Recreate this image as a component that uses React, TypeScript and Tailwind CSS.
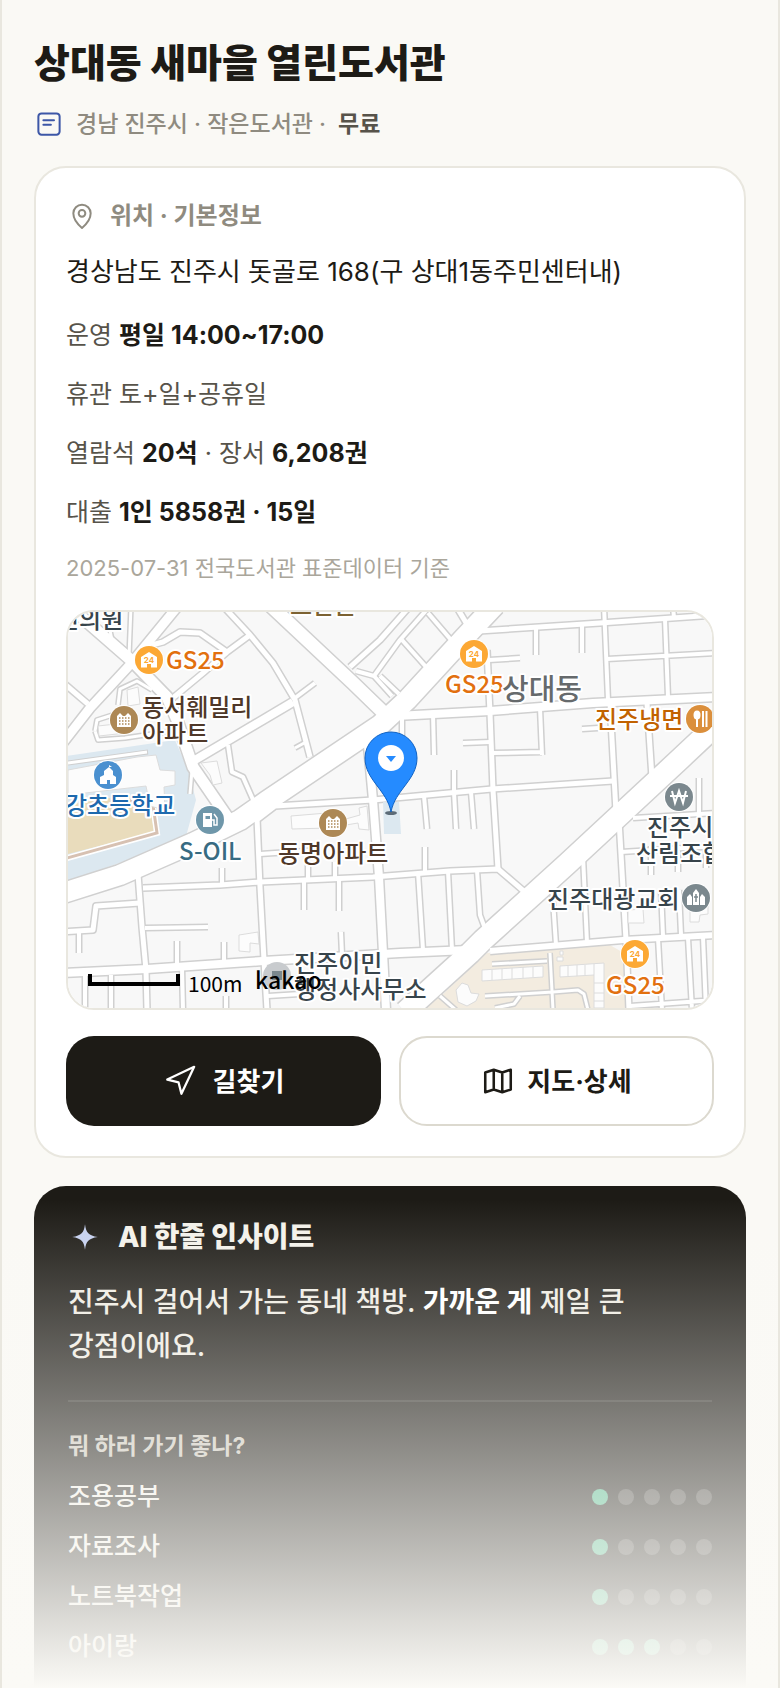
import React from 'react'
import { Navigation } from 'lucide-react'

type Road = { w: number; d: string }

const roads: Road[] = [
    // main roads
    { w: 20, d: 'M60 894 L120 875 L193 843 L240 820 L267 801 L380 725 L407 700 L463 639 L495 605' },
    { w: 21, d: 'M730 712 L680 759 L567 864 L483 940 L470 953 L405 1012' },
    { w: 11, d: 'M62 600 L132 661 L167 697 L177 720 L193 767 L228 818' },
    { w: 9, d: 'M178 606 L128 667 L90 708 L62 744' },
    { w: 13, d: 'M271 606 L353 683 L385 714' },
    { w: 8, d: 'M367 735 L373 800 L379 877 L386 1010' },
    { w: 8, d: 'M396 716 L490 711 L593 703 L716 697' },
    { w: 8, d: 'M60 973 L147 969 L263 961 L400 953 L468 950' },
    { w: 8, d: 'M293 702 L190 763' },
    { w: 6, d: 'M490 951 L623 940 L716 935' },
    // side streets
    { w: 5, d: 'M223 606 L250 635 L273 663 L295 700 L310 757' },
    { w: 4, d: 'M295 698 L315 683' },
    { w: 5, d: 'M350 667 L380 640 L410 606' },
    { w: 4, d: 'M356 671 L374 676 L392 696 M374 676 L400 640 L430 606' },
    { w: 4, d: 'M428 613 L452 641 M402 640 L427 668 M380 676 L399 694' },
    { w: 5, d: 'M456 606 L468 626' },
    { w: 5, d: 'M250 635 L227 652 L203 673 L174 697' },
    { w: 5, d: 'M152 645 L163 642 L180 632 L200 633 L227 652' },
    { w: 4, d: 'M228 745 L232 772 L243 777 L254 802' },
    { w: 3, d: 'M131 606 L129 657 M106 612 L112 640' },
    { w: 5, d: 'M60 680 L88 704' },
    { w: 3, d: 'M118 705 L120 689 L137 681 L152 690 M95 731 L97 720 L122 712 M95 731 L98 740 L125 738 L172 731' },
    { w: 3, d: 'M190 794 L192 770 M295 748 L306 742' },
    { w: 5, d: 'M258 819 L275 806 L373 800 L492 789 L613 781' },
    { w: 5, d: 'M257 818 L260 887 L264 960 L267 1010' },
    { w: 5, d: 'M143 888 L220 885 L260 882 L373 877 L450 871 L498 869 L526 893' },
    { w: 5, d: 'M138 874 L142 927 L146 970 L147 1010' },
    { w: 5, d: 'M60 932 L93 930 L96 906 L140 903' },
    { w: 4, d: 'M145 928 L208 927 M79 933 L79 953 M177 941 L177 966 M224 942 L224 962 M222 868 L222 885' },
    { w: 4, d: 'M260 854 L320 850 M308 862 L308 880 M335 862 L335 880 M304 882 L304 910 M339 880 L339 911 M341 932 L342 955' },
    { w: 4, d: 'M85 975 L85 1010 M111 975 L111 1010 M182 968 L183 1010 M226 996 L226 1010 M268 996 L300 994' },
    { w: 4, d: 'M418 872 L423 950 M448 871 L452 950 M477 870 L480 915 L487 934' },
    { w: 4, d: 'M425 847 L425 872 M424 796 L427 829 M454 770 L454 792 L456 829 M471 792 L474 829' },
    { w: 5, d: 'M487 650 L490 713 L493 790 L498 869' },
    { w: 5, d: 'M479 631 L600 623 L716 615' },
    { w: 4, d: 'M607 659 L716 653 M604 606 L608 700 M665 619 L668 697 M673 606 L674 618' },
    { w: 5, d: 'M610 703 L616 812 M647 703 L652 778' },
    { w: 4, d: 'M536 628 L536 655 M582 625 L582 653 M489 660 L520 658 M433 713 L434 755 M402 716 L402 742' },
    { w: 4, d: 'M463 743 L490 742 M540 708 L542 755 M492 753 L542 752 M582 729 L598 728 M699 778 L699 815' },
    { w: 4, d: 'M633 818 L716 813 M621 852 L716 846 M651 846 L651 875 M678 846 L678 872 M706 846 L706 868' },
    { w: 5, d: 'M619 820 L626 940 L629 1010' },
    { w: 4, d: 'M583 856 L587 943 M552 885 L556 945 M661 890 L663 936 M679 890 L681 935' },
    { w: 4, d: 'M658 938 L662 1010 M688 938 L692 1010 M703 937 L706 1010 M630 1006 L716 1000' },
    { w: 3, d: 'M492 964 L547 961 M550 953 L553 1010 M485 996 L553 992 L578 990 L584 994 L588 1010 M520 996 L514 1004 L495 1008 M440 996 L456 1010' },
]

const buildings = [
    'M68 770 L137 757 L156 755 L160 770 L175 771 L175 785 L164 787 L165 810 L150 806 L146 786 L68 795Z',
    'M201 763 L217 761 L222 783 L213 785 L210 775Z',
    'M291 816 L327 813 L328 824 L360 815 L359 808 L367 806 L369 830 L359 829 L358 823 L328 828 L292 829Z',
    'M239 935 L258 932 L259 944 L250 943 L250 952 L239 951Z',
    'M127 690 L138 687 L140 704 L128 706Z',
    'M98 726 L125 723 L126 733 L99 736Z',
    'M690 895 L708 893 L708 914 L700 915 L699 922 L690 922Z',
    'M628 910 L643 909 L644 923 L628 923Z',
    'M456 990 L462 983 L468 985 L471 993 L479 994 L476 1001 L467 1006 L458 1002Z',
    'M482 970 L543 966 L543 977 L482 981Z M492 970 V980 M502 969 V979 M512 968 V979 M523 967 V978 M533 967 V977',
    'M560 966 L604 963 V1008 H594 V975 L560 977Z M568 966 V976 M577 965 V976 M585 965 V975 M594 964 V975 M594 983 H604 M594 993 H604 M594 1001 H604',
    'M560 951 h3 v4 h-3z M557 957 h6 v4 h-6z',
]

const Store = ({ x, y }: { x: number; y: number }) => (
    <g transform={`translate(${x} ${y})`}>
        <circle r="15" fill="#fff" />
        <circle r="14" fill="#fca834" />
        <path d="M-8 -3 L0 -8 L8 -3 V7.500 H2 V4 H-2 V7.500 H-8Z" fill="#fff" />
        <text y="3" textAnchor="middle" className="fill-[#fca834] font-['Inter'] text-[8px] font-bold">24</text>
    </g>
)

const Apartment = ({ x, y }: { x: number; y: number }) => (
    <g transform={`translate(${x} ${y})`}>
        <circle r="15" fill="#fff" />
        <circle r="14" fill="#ad8855" />
        <path d="M-7 -4 L-4 -7 L-1 -4 L1 -4 L4 -7 L7 -4 V7 H-7Z" fill="#fff" />
        <path d="M-5 -2 H6 M-5 1 H6 M-5 4 H6" stroke="#ad8855" strokeWidth="1.500" strokeDasharray="1.500 1.500" />
    </g>
)

const Label = ({ x, y, color, big, children }: { x: number; y: number; color: string; big?: boolean; children: string }) => (
    <text
        x={x}
        y={y}
        fill={color}
        stroke="#fff"
        strokeWidth="4"
        strokeLinejoin="round"
        paintOrder="stroke"
        className={`font-['Noto_Sans_CJK_KR',sans-serif] font-medium ${big ? 'text-[29px]' : 'text-[24px]'}`}
    >
        {children}
    </text>
)

const LocationMap = () => (
    <svg viewBox="68 612 644 396" preserveAspectRatio="xMidYMid slice" className="block h-full w-full" role="img" aria-label="지도">
        <rect x="0" y="600" width="800" height="420" fill="#f8f8f8" />
        <path d="M60 757 L175 740 L188 770 L196 800 L185 840 L150 852 L60 884Z" fill="#dce8f0" />
        <path d="M60 806 L128 795 L150 803 L154 832 L60 856Z" fill="#e9dcbc" />
        <path d="M60 860 L157 833 L153 805" fill="none" stroke="#fff" strokeWidth="6" />
        <path d="M60 860 L157 833 L153 805 L130 800" fill="none" stroke="#d7c1b2" strokeWidth="3" />
        <path d="M68 763 L148 752" stroke="#cfcfcf" strokeWidth="5" />
        <path d="M68 763 L147 752" stroke="#fff" strokeWidth="3" />
        <path d="M487 953 L610 945 L622 952 L627 1012 L420 1012 L442 995Z" fill="#f3ece0" />
        {roads.map((road) => (
            <path key={road.d} d={road.d} fill="none" stroke="#d0d0d0" strokeWidth={road.w + 3} strokeLinejoin="round" />
        ))}
        {roads.map((road) => (
            <path key={road.d} d={road.d} fill="none" stroke="#fff" strokeWidth={road.w} strokeLinejoin="round" strokeLinecap="butt" />
        ))}
        {buildings.map((d) => (
            <path key={d} d={d} fill="#fcfcfc" stroke="#dcdcdc" />
        ))}
        <path d="M383 802 H399 L401 834 H384Z" fill="#dce8f0" />

        <Store x={149} y={660} />
        <Label x={166} y={669} color="#e2700f">GS25</Label>
        <Apartment x={124} y={720} />
        <Label x={142} y={716} color="#4f3829">동서훼밀리</Label>
        <Label x={142} y={742} color="#4f3829">아파트</Label>
        <Label x={57} y={628} color="#37444b">인의원</Label>
        <Label x={290} y={614} color="#7c6232">고반든</Label>

        <g transform="translate(108 775)">
            <circle r="15" fill="#fff" />
            <circle r="14" fill="#4a90d0" />
            <path d="M-8 9 V2 L-4 0 V-4 L1 -8 L5 -4 V0 L8 2 V9 H2 V5 H-1 V9Z M1 -8 V-10 L4 -8Z" fill="#fff" />
        </g>
        <Label x={65} y={814} color="#1d69ae">강초등학교</Label>

        <g transform="translate(210 820)">
            <circle r="15" fill="#fff" />
            <circle r="14" fill="#6f97aa" />
            <path d="M-7 -7 H2 V7 H-7Z" fill="#fff" />
            <path d="M-4.500 -4 H0 V-1 H-4.500Z" fill="#6f97aa" />
            <path d="M2 0 H4 V5 H7 V-2 L4 -6" fill="none" stroke="#fff" strokeWidth="1.500" />
        </g>
        <Label x={179} y={860} color="#376b82">S-OIL</Label>

        <Apartment x={333} y={823} />
        <Label x={278} y={862} color="#4f3829">동명아파트</Label>

        <Store x={474} y={654} />
        <Label x={445} y={693} color="#e2700f">GS25</Label>
        <Label x={502} y={700} color="#666a6c" big>상대동</Label>
        <Label x={595} y={728} color="#c26200">진주냉면</Label>
        <g transform="translate(700 719)">
            <circle r="15" fill="#fff" />
            <circle r="14" fill="#db8f3c" />
            <ellipse cx="-3" cy="-4" rx="3.500" ry="4.500" fill="#fff" />
            <path d="M-3 -2 V8 M3 -8 V8 M6.500 -8 V8" stroke="#fff" strokeWidth="2" />
        </g>

        <g transform="translate(679 797)">
            <circle r="15" fill="#fff" />
            <circle r="14" fill="#7b888e" />
            <path d="M-7 -6 L-4 6 L0 -6 L4 6 L7 -6 M-9 -1 H9" fill="none" stroke="#fff" strokeWidth="2" />
        </g>
        <Label x={647} y={836} color="#37444b">진주시</Label>
        <Label x={636} y={862} color="#37444b">산림조합</Label>

        <Label x={547} y={908} color="#37444b">진주대광교회</Label>
        <g transform="translate(696 898)">
            <circle r="15" fill="#fff" />
            <circle r="14" fill="#7b888e" />
            <path d="M-9 7 V-1 L-6 -4 L-4 -1 V7Z M-3 7 V-5 L0 -9 L3 -5 V7Z M4 7 V-1 L6 -4 L9 -1 V7Z" fill="#fff" />
            <path d="M0 -4 V4 M-2 -1 H2" stroke="#7b888e" strokeWidth="1.500" />
        </g>

        <Store x={635} y={954} />
        <Label x={606} y={994} color="#e2700f">GS25</Label>

        <circle cx="277" cy="976" r="14" fill="#c8cbce" />
        <rect x="272" y="971" width="10" height="9" fill="#7b888e" />
        <Label x={294} y={972} color="#37444b">진주이민</Label>
        <Label x={294} y={998} color="#37444b">행정사사무소</Label>

        <path d="M90 974 V984 H178 V974" fill="none" stroke="#000" strokeWidth="4" />
        <text x="188" y="992" className="fill-black font-['Noto_Sans_CJK_KR',sans-serif] text-[21px]">100m</text>
        <text x="255" y="989" className="fill-black font-['Noto_Sans_CJK_KR',sans-serif] text-[23px] font-medium">kakao</text>

        <ellipse cx="391" cy="813" rx="6" ry="2" fill="#5c6b77" />
        <path d="M391 812 C387 790 365 780 365 758 A26 26 0 0 1 417 758 C417 780 395 790 391 812Z" fill="#258bff" stroke="#1163c4" />
        <circle cx="391" cy="758" r="13" fill="#fff" />
        <path d="M386 756 H396 L391 762Z" fill="#258bff" />
    </svg>
)

const purposes = [
    { name: '조용공부', score: 1 },
    { name: '자료조사', score: 1 },
    { name: '노트북작업', score: 1 },
    { name: '아이랑', score: 3 },
]

const App = () => {
    return (
        <div className="relative min-h-screen border-x-2 border-[#e9e7df] bg-[#faf9f5] px-8 pt-10 font-['Inter','Noto_Sans_CJK_KR',sans-serif] text-[#1d1b16]">
            <header>
                <h1 className="text-[39px] leading-[46px] font-extrabold">상대동 새마을 열린도서관</h1>
                <p className="mt-5 flex items-center gap-3 text-[23px] leading-9 font-medium text-[#8f8b80]">
                    <svg width="30" height="30" viewBox="0 0 24 24" fill="none" stroke="#3d57a7" strokeWidth="1.600" strokeLinecap="round">
                        <rect x="3.500" y="3.500" width="17" height="17" rx="2.500" />
                        <path d="M7.500 9 H16 M7.500 12.500 H13.500" />
                    </svg>
                    <span>경남 진주시 · 작은도서관 ·</span>
                    <b className="font-bold text-[#57534a]">무료</b>
                </p>
            </header>

            <section className="mt-6 rounded-[32px] border-2 border-[#e9e7df] bg-white px-[30px] pt-[30px] pb-[30px]">
                <h2 className="flex items-center gap-3 text-[24px] leading-9 font-bold text-[#8f8b80]">
                    <svg width="32" height="32" viewBox="0 0 24 24" fill="none" stroke="currentColor" strokeWidth="1.500" strokeLinejoin="round">
                        <path d="M12 21 C9 18.500 5.500 14.500 5.500 10 A6.500 6.500 0 0 1 18.500 10 C18.500 14.500 15 18.500 12 21Z" />
                        <circle cx="12" cy="10" r="2.500" />
                    </svg>
                    위치 · 기본정보
                </h2>
                <p className="mt-4 text-[26px] leading-11">경상남도 진주시 돗골로 168(구 상대1동주민센터내)</p>
                <ul className="mt-5 flex flex-col gap-4 text-[25px] leading-[43px] text-[#57534a]">
                    <li>운영 <b className="font-bold text-[#1d1b16]">평일 14:00~17:00</b></li>
                    <li>휴관 토+일+공휴일</li>
                    <li>열람석 <b className="font-bold text-[#1d1b16]">20석</b> · 장서 <b className="font-bold text-[#1d1b16]">6,208권</b></li>
                    <li>대출 <b className="font-bold text-[#1d1b16]">1인 5858권 · 15일</b></li>
                </ul>
                <p className="mt-[18px] text-[22px] leading-8 text-[#aaa69b]">2025-07-31 전국도서관 표준데이터 기준</p>

                <div className="mt-[26px] h-[400px] overflow-hidden rounded-[28px] border-2 border-[#e9e7df]">
                    <LocationMap />
                </div>

                <div className="mt-[26px] grid grid-cols-2 gap-[18px] text-[26px] font-bold">
                    <button type="button" className="flex h-[90px] items-center justify-center gap-4 rounded-[28px] bg-[#1d1b16] text-white">
                        <Navigation size={34} strokeWidth={1.6} />
                        길찾기
                    </button>
                    <button type="button" className="flex h-[90px] items-center justify-center gap-3 rounded-[28px] border-2 border-[#dcd9cf] bg-white">
                        <svg width="34" height="34" viewBox="0 0 24 24" fill="none" stroke="currentColor" strokeWidth="1.800" strokeLinejoin="round">
                            <path d="M9 4 L3 6 V20 L9 18 L15 20 L21 18 V4 L15 6Z M9 4 V18 M15 6 V20" />
                        </svg>
                        지도·상세
                    </button>
                </div>
            </section>

            <section className="mt-7 rounded-t-[32px] bg-[#1d1b16] px-[34px] pt-8 pb-4 text-[#f3f1ea]">
                <h2 className="flex items-center gap-4 text-[28px] leading-[38px] font-extrabold">
                    <svg width="34" height="34" viewBox="0 0 24 24" fill="#c5d0ef">
                        <path d="M12 3 C12.800 9 14.500 11 21 12 C14.500 13 12.800 15 12 21 C11.200 15 9.500 13 3 12 C9.500 11 11.200 9 12 3Z" />
                    </svg>
                    AI 한줄 인사이트
                </h2>
                <p className="mt-6 text-[28px] leading-11 font-medium break-keep text-[#efece3]">
                    진주시 걸어서 가는 동네 책방. <b className="font-bold text-white">가까운 게</b> 제일 큰 강점이에요.
                </p>
                <div className="mt-8 border-t-2 border-white/10 pt-[26px]">
                    <h3 className="text-[23px] leading-9 font-bold text-[#c9c5ba]">뭐 하러 가기 좋나?</h3>
                    <ul className="mt-2 text-[25px] font-medium">
                        {purposes.map((item) => (
                            <li key={item.name} className="flex h-[50px] items-center justify-between">
                                {item.name}
                                <span className="flex gap-[10px]">
                                    {[1, 2, 3, 4, 5].map((n) => (
                                        <i key={n} className={`size-4 rounded-full ${n <= item.score ? 'bg-[#4ab688]' : 'bg-white/20'}`} />
                                    ))}
                                </span>
                            </li>
                        ))}
                    </ul>
                </div>
            </section>

            <div className="pointer-events-none absolute inset-x-0 bottom-0 h-[488px] bg-linear-to-b from-[#fbfaf6]/0 to-[#fbfaf6]" />
        </div>
    )
}

export default App
